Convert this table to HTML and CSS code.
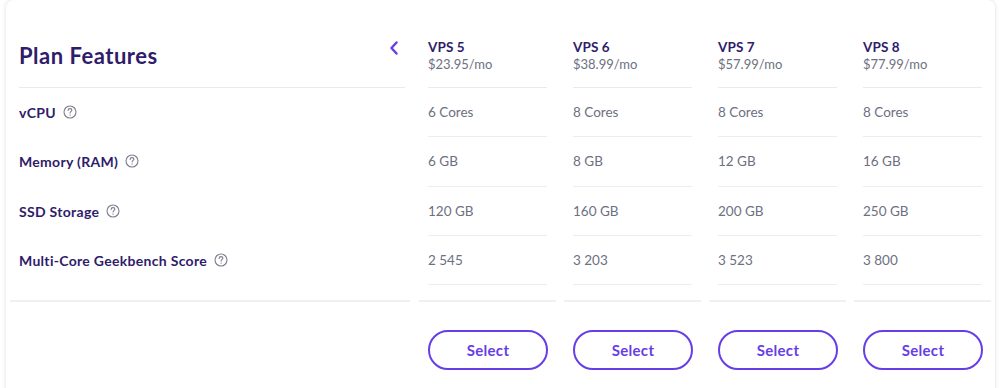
FILE: index.html
```html
<!DOCTYPE html>
<html lang="en">
<head>
<meta charset="utf-8">
<title>Plan Features</title>
<link rel="stylesheet" href="styles.css">
</head>
<body>
<div class="card">
  <div class="cols">
    <div class="col col-features">
      <div class="head head-features">
        <h2 class="title">Plan Features</h2>
        <button class="back" aria-label="Previous">
          <svg width="10" height="14" viewBox="0 0 10 14"><path d="M7.5 1.5 L2.5 7 L7.5 12.5" fill="none" stroke="#673de6" stroke-width="2.4" stroke-linecap="round" stroke-linejoin="round"/></svg>
        </button>
      </div>
      <div class="frow"><span class="label">vCPU</span><svg class="help" width="14" height="14" viewBox="0 0 14 14"><circle cx="7" cy="7" r="6" fill="none" stroke="#7b7d8f" stroke-width="1.1"/><path d="M5.1 5.4 C5.1 4.2 6 3.6 7 3.6 C8.1 3.6 8.9 4.3 8.9 5.2 C8.9 6.4 7.1 6.5 7.1 8" fill="none" stroke="#7b7d8f" stroke-width="1.1" stroke-linecap="round"/><circle cx="7.1" cy="10.1" r="0.7" fill="#7b7d8f"/></svg></div>
      <div class="frow"><span class="label">Memory (RAM)</span><svg class="help" width="14" height="14" viewBox="0 0 14 14"><circle cx="7" cy="7" r="6" fill="none" stroke="#7b7d8f" stroke-width="1.1"/><path d="M5.1 5.4 C5.1 4.2 6 3.6 7 3.6 C8.1 3.6 8.9 4.3 8.9 5.2 C8.9 6.4 7.1 6.5 7.1 8" fill="none" stroke="#7b7d8f" stroke-width="1.1" stroke-linecap="round"/><circle cx="7.1" cy="10.1" r="0.7" fill="#7b7d8f"/></svg></div>
      <div class="frow"><span class="label">SSD Storage</span><svg class="help" width="14" height="14" viewBox="0 0 14 14"><circle cx="7" cy="7" r="6" fill="none" stroke="#7b7d8f" stroke-width="1.1"/><path d="M5.1 5.4 C5.1 4.2 6 3.6 7 3.6 C8.1 3.6 8.9 4.3 8.9 5.2 C8.9 6.4 7.1 6.5 7.1 8" fill="none" stroke="#7b7d8f" stroke-width="1.1" stroke-linecap="round"/><circle cx="7.1" cy="10.1" r="0.7" fill="#7b7d8f"/></svg></div>
      <div class="frow"><span class="label">Multi-Core Geekbench Score</span><svg class="help" width="14" height="14" viewBox="0 0 14 14"><circle cx="7" cy="7" r="6" fill="none" stroke="#7b7d8f" stroke-width="1.1"/><path d="M5.1 5.4 C5.1 4.2 6 3.6 7 3.6 C8.1 3.6 8.9 4.3 8.9 5.2 C8.9 6.4 7.1 6.5 7.1 8" fill="none" stroke="#7b7d8f" stroke-width="1.1" stroke-linecap="round"/><circle cx="7.1" cy="10.1" r="0.7" fill="#7b7d8f"/></svg></div>
    </div>

    <div class="col">
      <div class="head"><div class="name">VPS 5</div><div class="price">$23.95/mo</div></div>
      <div class="vrow">6 Cores</div>
      <div class="vrow">6 GB</div>
      <div class="vrow">120 GB</div>
      <div class="vrow">2 545</div>
    </div>
    <div class="col">
      <div class="head"><div class="name">VPS 6</div><div class="price">$38.99/mo</div></div>
      <div class="vrow">8 Cores</div>
      <div class="vrow">8 GB</div>
      <div class="vrow">160 GB</div>
      <div class="vrow">3 203</div>
    </div>
    <div class="col">
      <div class="head"><div class="name">VPS 7</div><div class="price">$57.99/mo</div></div>
      <div class="vrow">8 Cores</div>
      <div class="vrow">12 GB</div>
      <div class="vrow">200 GB</div>
      <div class="vrow">3 523</div>
    </div>
    <div class="col">
      <div class="head"><div class="name">VPS 8</div><div class="price">$77.99/mo</div></div>
      <div class="vrow">8 Cores</div>
      <div class="vrow">16 GB</div>
      <div class="vrow">250 GB</div>
      <div class="vrow">3 800</div>
    </div>
  </div>

  <div class="foot">
    <div class="foot-spacer"></div>
    <div class="foot-cell"><button class="select">Select</button></div>
    <div class="foot-cell"><button class="select">Select</button></div>
    <div class="foot-cell"><button class="select">Select</button></div>
    <div class="foot-cell"><button class="select">Select</button></div>
  </div>
</div>
</body>
</html>
```

FILE: styles.css
```css
* { box-sizing: border-box; }

html, body {
  margin: 0;
  padding: 0;
  background: #ffffff;
  overflow: hidden;
}

body {
  font-family: "Lato", "Noto Sans", sans-serif;
  color: #2f1c6a;
  height: 388px;
}

.card {
  margin: 0 5px 0 6px;
  height: 400px;
  background: #ffffff;
  border-radius: 8px;
  box-shadow: 0 0 4px rgba(30, 30, 60, 0.15);
  padding: 0 4px;
}

.cols {
  display: flex;
  gap: 8px;
}

.col {
  width: 137px;
  padding: 0 9px 15px;
  border-bottom: 2px solid #f0f0f3;
}

.col-features {
  width: 400px;
  margin-right: 1px;
  padding: 0 5px 15px 9px;
}

.head {
  height: 88px;
  border-bottom: 1px solid #e9e8f3;
  display: flex;
  flex-direction: column;
  justify-content: flex-end;
  padding-bottom: 14px;
}

.head-features {
  flex-direction: row;
  justify-content: space-between;
  align-items: flex-start;
  padding: 0;
}

.title {
  margin: 43px 0 0;
  font-size: 22px;
  font-weight: 700;
  line-height: 26px;
  letter-spacing: 0.5px;
  color: #2f1c6a;
}

.back {
  margin: 41px 6px 0 0;
  padding: 0;
  border: 0;
  background: none;
  width: 10px;
  height: 14px;
  display: flex;
}

.name {
  font-size: 13.5px;
  font-weight: 700;
  line-height: 16px;
  letter-spacing: 0.1px;
  color: #2f1c6a;
}

.price {
  font-size: 13px;
  line-height: 18px;
  color: #6d7081;
}

.frow {
  height: 49.25px;
  display: flex;
  align-items: center;
  gap: 7px;
}

.label {
  font-size: 14px;
  font-weight: 700;
  letter-spacing: 0.3px;
  color: #2f1c6a;
}

.help { display: block; margin-top: -1px; }

.vrow {
  height: 49.25px;
  border-bottom: 1px solid #ececf4;
  display: flex;
  align-items: center;
  font-size: 13.5px;
  color: #6d7081;
}

.foot {
  display: flex;
  gap: 8px;
  padding-top: 28px;
}

.foot-spacer {
  width: 400px;
  margin-right: 1px;
}

.foot-cell {
  width: 137px;
  padding: 0 9px;
}

.select {
  width: 120px;
  height: 40px;
  border: 2px solid #673de6;
  border-radius: 20px;
  background: #ffffff;
  color: #673de6;
  font-family: "Lato", "Noto Sans", sans-serif;
  font-size: 15px;
  font-weight: 700;
  letter-spacing: 0.3px;
  cursor: pointer;
}
```
